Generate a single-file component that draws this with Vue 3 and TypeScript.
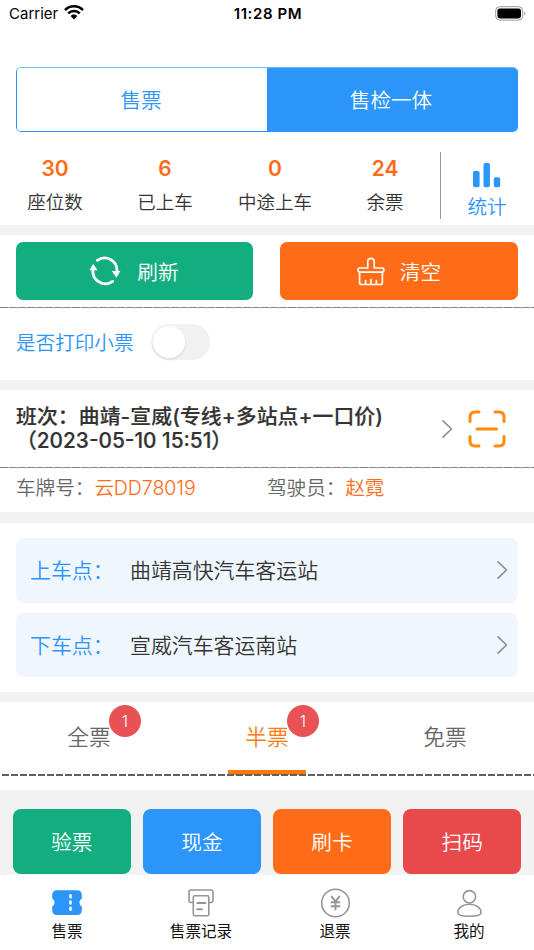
<script setup lang="ts">
import { ref } from 'vue'

interface Stat { value: number; label: string }
interface Stop { label: string; name: string }
interface TicketType { name: string; count: number }
interface Action { name: string; tone: string }
interface NavItem { name: string; icon: string }

const mode = ref(1)
const modes: string[] = ['售票', '售检一体']
const stats: Stat[] = [
  { value: 30, label: '座位数' },
  { value: 6, label: '已上车' },
  { value: 0, label: '中途上车' },
  { value: 24, label: '余票' },
]
const printReceipt = ref(false)
const stops: Stop[] = [
  { label: '上车点：', name: '曲靖高快汽车客运站' },
  { label: '下车点：', name: '宣威汽车客运南站' },
]
const activeType = ref(1)
const ticketTypes: TicketType[] = [
  { name: '全票', count: 1 },
  { name: '半票', count: 1 },
  { name: '免票', count: 0 },
]
const actions: Action[] = [
  { name: '验票', tone: 'green' },
  { name: '现金', tone: 'blue' },
  { name: '刷卡', tone: 'orange' },
  { name: '扫码', tone: 'red' },
]
const navItems: NavItem[] = [
  { name: '售票', icon: 'ticket' },
  { name: '售票记录', icon: 'record' },
  { name: '退票', icon: 'refund' },
  { name: '我的', icon: 'user' },
]
</script>

<template>
  <div class="screen">
    <header class="status">
      <div class="carrier">
        <span>Carrier</span>
        <svg width="20" height="15" viewBox="0 0 20 15">
          <g fill="none" stroke="#000" stroke-width="2.5">
            <path d="M1 5.1a12.7 12.7 0 0 1 18 0" />
            <path d="M4.2 8.4a8.2 8.2 0 0 1 11.6 0" />
          </g>
          <path d="M6.6 11a4.8 4.8 0 0 1 6.8 0L10 14.5z" />
        </svg>
      </div>
      <div class="clock">11:28 PM</div>
      <div class="battery">
        <svg width="32" height="15" viewBox="0 0 32 15">
          <rect x=".7" y=".7" width="27" height="13.4" rx="4" fill="none" stroke="#999" />
          <rect x="2.4" y="2.4" width="23.6" height="10" rx="2.4" />
          <path d="M29.3 5.2c1.6.7 1.6 3.7 0 4.4z" fill="#999" />
        </svg>
      </div>
    </header>

    <div class="segment">
      <button v-for="(m, i) in modes" :key="m" :class="{ on: mode === i }" @click="mode = i">{{ m }}</button>
    </div>

    <section class="stats">
      <div v-for="s in stats" :key="s.label" class="stat">
        <b>{{ s.value }}</b>
        <span>{{ s.label }}</span>
      </div>
      <div class="summary">
        <svg width="28" height="25" viewBox="0 0 28 25" fill="#2b95fa">
          <rect x="0" y="8" width="6.6" height="16.3" rx="1.8" />
          <rect x="10.5" y="0" width="6.4" height="24.3" rx="1.8" />
          <rect x="20.8" y="14.2" width="6.4" height="10.1" rx="1.8" />
        </svg>
        <span>统计</span>
      </div>
    </section>
    <div class="band"></div>

    <section class="tools">
      <button class="green">
        <svg width="32" height="30" viewBox="0 0 32 30">
          <g fill="none" stroke="#fff" stroke-width="2.8" stroke-linecap="round">
            <path d="M8.400 4.300A12.400 12.400 0 0 1 28 15" />
            <path d="M23.600 25.400A12.400 12.400 0 0 1 4.200 13" />
          </g>
          <path d="M.4 14.200 4.200 7.800l4.300 6.400zM22.800 15h8.600L27.400 21.700z" fill="#fff" />
        </svg>
        <span>刷新</span>
      </button>
      <button class="orange">
        <svg class="brush" width="28" height="29" viewBox="0 0 28 29" fill="none" stroke="#fff" stroke-width="1.7" stroke-linejoin="round" stroke-linecap="round">
          <path d="M10.8 11V4.6a3.2 3.2 0 0 1 6.4 0V11h8.2q1.5 0 1.5 1.5v1.1q0 1.5-1.5 1.5H2.6q-1.5 0-1.5-1.5v-1.1Q1.100 11 2.600 11z" />
          <path d="M2.6 15.200v10.300q0 2 2 2h18.800q2 0 2-2V15.200M8.600 23.500v4M14 22.500v5M19.400 23.500v4" />
        </svg>
        <span>清空</span>
      </button>
    </section>
    <div class="dash"></div>

    <section class="print">
      <span>是否打印小票</span>
      <div class="switch" :class="{ on: printReceipt }" role="switch" @click="printReceipt = !printReceipt"><i></i></div>
    </section>
    <div class="band"></div>

    <section class="trip">
      <h1><span>班次：曲靖-宣威(专线+多站点+一口价)</span><br>（2023-05-10 15:51）</h1>
      <svg class="chevron" width="12" height="20" viewBox="0 0 12 20"><path d="M2 1.800 10.500 10 2 18.200" /></svg>
      <svg class="scan" width="38" height="38" viewBox="0 0 38 38">
        <path d="M2 11.500V7q0-5 5-5h4M27 2h4q5 0 5 5v4.500M36 26.500V31q0 5-5 5h-4M11 36H7q-5 0-5-5v-4.500M9 19h19.500" />
      </svg>
    </section>
    <div class="dash"></div>

    <section class="vehicle">
      <div>车牌号：<em>云DD78019</em></div>
      <div>驾驶员：<em>赵霓</em></div>
    </section>
    <div class="band tall"></div>

    <section class="stops">
      <div v-for="s in stops" :key="s.label" class="stop">
        <label>{{ s.label }}</label>
        <span>{{ s.name }}</span>
        <svg class="chevron" width="12" height="20" viewBox="0 0 12 20"><path d="M2 1.800 10.500 10 2 18.200" /></svg>
      </div>
    </section>
    <div class="band"></div>

    <section class="types">
      <div v-for="(t, i) in ticketTypes" :key="t.name" class="type" :class="{ on: activeType === i }" @click="activeType = i">
        <span class="name">{{ t.name }}<i v-if="t.count">{{ t.count }}</i></span>
      </div>
    </section>
    <div class="dash dark"></div>

    <section class="actions">
      <button v-for="a in actions" :key="a.name" :class="a.tone">{{ a.name }}</button>
    </section>

    <nav>
      <div v-for="n in navItems" :key="n.name" class="nav-item">
        <svg v-if="n.icon === 'ticket'" width="32" height="30" viewBox="0 0 32 30">
          <path d="M6 2.200h20q4.800 0 4.800 4.800v3.500a4.500 4.500 0 0 0 0 8v3.700q0 4.800-4.800 4.800H6q-4.800 0-4.800-4.800v-3.700a4.500 4.500 0 0 0 0-8V7Q1.200 2.200 6 2.200z" fill="#2b95fa" />
          <path d="M19.500 7.300v2M19.500 13.500v2M19.500 19.700v2" stroke="#fff" stroke-width="2.600" stroke-linecap="round" />
        </svg>
        <svg v-else-if="n.icon === 'record'" class="line" width="32" height="30" viewBox="0 0 32 30">
          <path d="M7.500 14.500H6q-2 0-2-2V4q0-2 2-2h20q2 0 2 2v8.500q0 2-2 2h-1.500M9.800 7.800h12.500q1.500 0 1.500 1.500v17q0 1.500-1.500 1.500H9.800q-1.500 0-1.500-1.500v-17q0-1.500 1.500-1.500z" />
          <path d="M12.300 15h8M12.300 21.200h4.500" stroke-width="2.100" />
        </svg>
        <svg v-else-if="n.icon === 'refund'" class="line" width="32" height="30" viewBox="0 0 32 30">
          <circle cx="16.500" cy="15" r="13.800" />
          <path d="m12.700 8.600 3.800 4.700 3.800-4.700M16.500 13.300v8.200M12.500 14.200h8M12.500 18.200h8" stroke-width="1.900" />
        </svg>
        <svg v-else class="line" width="32" height="30" viewBox="0 0 32 30">
          <circle cx="16.400" cy="8.800" r="6.200" />
          <path d="M16.400 16.200c-6.800 0-11.600 3.500-11.600 8.600 0 2.600 4 3.400 11.600 3.400s11.600-.8 11.600-3.400c0-5.100-4.800-8.600-11.600-8.600z" />
        </svg>
        <span>{{ n.name }}</span>
      </div>
    </nav>
  </div>
</template>

<style>
body { margin: 0; background: #fff; }
</style>

<style scoped>
* { box-sizing: border-box; }
.screen {
  width: 534px; height: 950px; overflow: hidden; display: flex; flex-direction: column;
  background: #fff; color: #333; font-family: Inter, "Noto Sans CJK SC", sans-serif; font-weight: 350;
}
.screen > * { flex: none; }
svg { display: block; flex: none; }
button { border: 0; padding: 0; margin: 0; font: inherit; color: #fff; }
em, i { font-style: normal; }
.green { background: #13ae7f; }
.blue { background: #2b95fa; }
.orange { background: #ff6c17; }
.red { background: #e8494b; }
.band { height: 10px; background: #f2f2f2; }
.band.tall { height: 11px; }
.dash { height: 1px; background: repeating-linear-gradient(90deg, #858585 0 7.900px, #ddd 7.900px 9px); }
.dash.dark { height: 2px; margin-top: -1px; position: relative; background: repeating-linear-gradient(90deg, transparent 0 2px, #606060 2px 9px); }

.status { height: 67px; padding: 5px 7px 0 9px; display: grid; grid-template-columns: 1fr auto 1fr; align-items: start; color: #000; font-size: 15px; line-height: 18px; font-weight: 400; }
.carrier { display: flex; gap: 6px; }
.clock { font-weight: 600; letter-spacing: .6px; }
.battery { justify-self: end; padding-top: 1px; }

.segment { height: 65px; margin: 0 16px; display: flex; border: 1px solid #2b95fa; border-top-color: #6fb7fb; border-radius: 5px; overflow: hidden; }
.segment button { flex: 1; background: #fff; color: #2b95fa; font-size: 20.600px; padding: 0 2px 2px 0; }
.segment .on { background: #2b95fa; color: #fff; }

.stats { height: 93px; display: flex; padding-top: 20px; }
.stat { width: 110px; display: flex; flex-direction: column; align-items: center; }
.stat b { margin-top: 3px; color: #ff6c17; font-size: 21px; line-height: 27px; font-weight: 600; }
.stat span { margin-top: 7px; font-size: 18.500px; line-height: 26px; }
.summary { height: 67px; flex: 1; border-left: 1px solid #999; display: flex; flex-direction: column; align-items: center; padding: 11px 1px 0 0; color: #2b95fa; font-size: 19.500px; line-height: 28px; }
.summary span { margin-top: 5px; }

.tools { height: 72px; padding: 7px 16px; display: grid; grid-template-columns: 237px 238px; justify-content: space-between; }
.tools button { height: 58px; border-radius: 7px; display: flex; align-items: center; justify-content: center; gap: 16px; font-size: 20.700px; }
.tools .green { padding-right: 1px; }
.tools .brush { margin-right: -1px; }
.tools span { margin-top: -1px; }

.print { height: 72px; padding: 0 16px 4px; display: flex; align-items: center; gap: 17px; color: #2b95fa; font-size: 19.600px; }
.print span { margin-top: -2px; }
.switch { width: 59px; height: 36px; border-radius: 18px; background: #f1f1f1; padding: 2px; }
.switch.on { padding-left: 25px; background: #2b95fa; }
.switch i { display: block; width: 32px; height: 32px; border-radius: 50%; background: #fff; box-shadow: 0 2px 3px rgba(0, 0, 0, .08); }

.trip { height: 77px; padding: 0 28px 0 16px; display: flex; align-items: center; }
.trip h1 { flex: 1; margin: 0; padding-top: 1px; font-size: 20.800px; line-height: 24px; font-weight: 500; -webkit-text-stroke: .2px #333; white-space: nowrap; }
.trip h1 span { letter-spacing: .12px; }
.trip .scan { margin-left: 15px; }
.scan path { fill: none; stroke: #ff8a0c; stroke-width: 3; stroke-linecap: round; }
.chevron path { fill: none; stroke: #909090; stroke-width: 1.700; stroke-linecap: round; stroke-linejoin: round; }

.vehicle { height: 44px; padding: 6px 16px 0; display: grid; grid-template-columns: 1fr 1fr; font-size: 19.600px; line-height: 28px; color: #666; }
.vehicle em { color: #ff6c17; letter-spacing: -.1px; }

.stops { height: 169px; padding: 15px 16px; display: flex; flex-direction: column; gap: 10px; }
.stop { height: 65px; padding: 0 10.500px 0 14px; border-radius: 8px; background: #eff6fe; display: flex; align-items: center; font-size: 20.900px; }
.stop label, .stop span { margin-top: -2px; }
.stop label { width: 100px; color: #2b95fa; }
.stop span { flex: 1; }

.types { height: 73px; display: grid; grid-template-columns: repeat(3, 1fr); }
.type { display: flex; justify-content: center; font-size: 21.700px; line-height: 30px; color: #666; padding-top: 20px; }
.type.on { color: #ff7a09; background: linear-gradient(#ff7a09, #ff7a09) center bottom / 78px 5px no-repeat; }
.name { position: relative; height: 30px; }
.name i { position: absolute; left: 41.500px; top: -17px; width: 32px; height: 32px; border-radius: 50%; background: #e85254; color: #fff; font-size: 16px; line-height: 32px; text-align: center; }

.actions { height: 99px; border-top: 14px solid #fff; background: #f2f2f2; padding: 19px 13px 0; display: grid; grid-template-columns: repeat(4, 117.500px); justify-content: space-between; }
.actions button { height: 65px; border-radius: 8px; font-size: 20.700px; padding-bottom: 2px; }

nav { height: 75px; display: grid; grid-template-columns: repeat(4, 134px); background: #fff; padding-top: 13px; color: #111; }
.nav-item { display: flex; flex-direction: column; align-items: center; font-size: 15.600px; line-height: 24px; font-weight: 400; }
.nav-item span { margin-top: 2px; }
.line { fill: none; stroke: #959595; stroke-width: 1.600; stroke-linecap: round; stroke-linejoin: round; }
</style>
